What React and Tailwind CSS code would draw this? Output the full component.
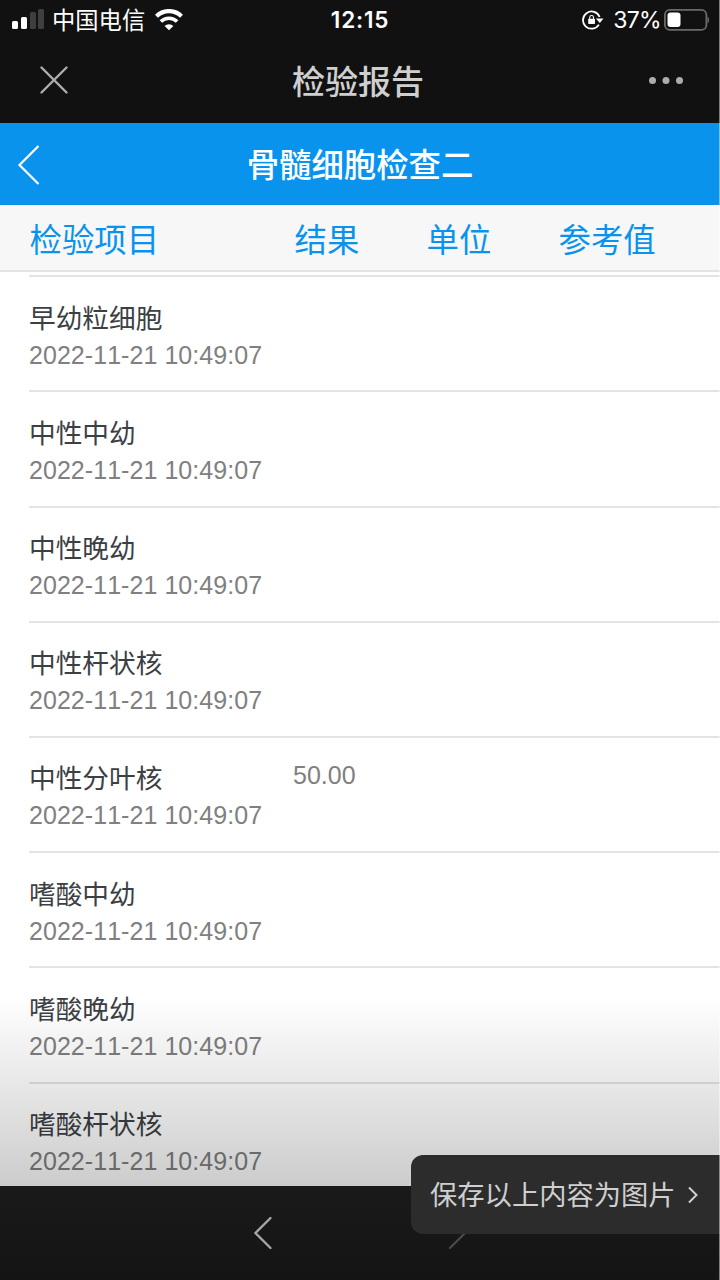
import React from 'react';

const columns = [
  { label: '检验项目', width: 'w-[265px]' },
  { label: '结果', width: 'w-[132px]' },
  { label: '单位', width: 'w-[132px]' },
  { label: '参考值', width: 'flex-1' },
];

const items = [
  { name: '早幼粒细胞', time: '2022-11-21 10:49:07', result: '' },
  { name: '中性中幼', time: '2022-11-21 10:49:07', result: '' },
  { name: '中性晚幼', time: '2022-11-21 10:49:07', result: '' },
  { name: '中性杆状核', time: '2022-11-21 10:49:07', result: '' },
  { name: '中性分叶核', time: '2022-11-21 10:49:07', result: '50.00' },
  { name: '嗜酸中幼', time: '2022-11-21 10:49:07', result: '' },
  { name: '嗜酸晚幼', time: '2022-11-21 10:49:07', result: '' },
  { name: '嗜酸杆状核', time: '2022-11-21 10:49:07', result: '' },
];

const StatusBar = () => (
  <div className="grid h-10 grid-cols-3 items-center text-white">
    <div className="flex items-center pl-3">
      <svg width="32" height="22" viewBox="0 0 32 22">
        <rect x="0" y="12" width="6" height="8" rx="1.5" fill="#fff" />
        <rect x="9" y="8" width="6" height="12" rx="1.5" fill="#fff" />
        <rect x="18" y="3" width="6" height="17" rx="1.5" fill="#3f3f3f" />
        <rect x="26" y="0" width="6" height="20" rx="1.5" fill="#3f3f3f" />
      </svg>
      <span className="ml-2 text-[23.3px] leading-[38px] pb-[2px]">中国电信</span>
      <svg className="ml-[10px]" width="28" height="22" viewBox="0 0 28 22">
        <path d="M1.5 7.2a17.8 17.8 0 0 1 25 0" fill="none" stroke="#fff" strokeWidth="4.2" />
        <path d="M5.9 12.6a11.4 11.4 0 0 1 16.2 0" fill="none" stroke="#fff" strokeWidth="3.6" />
        <path d="M9.6 17a6.4 6.4 0 0 1 8.8 0L14 21.2z" fill="#fff" />
      </svg>
    </div>
    <div className="text-center font-['Inter','Liberation_Sans',sans-serif] text-[22.5px] font-semibold leading-10 tracking-[0.8px]">
      12:15
    </div>
    <div className="flex items-center justify-end pr-[11px]">
      <svg width="22" height="20" viewBox="0 0 22 20">
        <path d="M16.9 14.6A8.6 8.6 0 1 1 17.6 7" fill="none" stroke="#fff" strokeWidth="1.8" />
        <path d="M13.9 8.6h7.6L17.8 13z" fill="#fff" />
        <rect x="6.2" y="8.8" width="6.8" height="5.2" rx="0.8" fill="#fff" />
        <path d="M7.7 9.2V7.4a1.9 1.9 0 0 1 3.8 0v1.8" fill="none" stroke="#fff" strokeWidth="1.1" />
      </svg>
      <span className="ml-[9px] font-['Inter','Liberation_Sans',sans-serif] text-[23px] leading-10 tracking-[-0.7px]">37%</span>
      <svg className="ml-[3px]" width="45" height="22" viewBox="0 0 45 22">
        <rect x="0.9" y="0.9" width="41.5" height="20" rx="5" fill="none" stroke="#6a6a6a" strokeWidth="1.8" />
        <rect x="3.5" y="3.5" width="13" height="14.5" rx="3" fill="#fff" />
        <path d="M43.5 7.5c2 1 2 6 0 7z" fill="#6a6a6a" />
      </svg>
    </div>
  </div>
);

const TitleBar = () => (
  <div className="flex h-[83px] items-center justify-between pb-[3px] pl-10 pr-[36px]">
    <svg width="28" height="28" viewBox="0 0 28 28" className="text-[#adadad]">
      <path d="M1.5 1.5l25 25M26.5 1.5l-25 25" stroke="currentColor" strokeWidth="2.4" strokeLinecap="round" />
    </svg>
    <h1 className="text-[33px] font-medium leading-none text-[#cfcfcf]">检验报告</h1>
    <svg width="36" height="8" viewBox="0 0 36 8" fill="#adadad">
      <circle cx="4.5" cy="4.4" r="3.5" />
      <circle cx="18" cy="4.4" r="3.5" />
      <circle cx="31.5" cy="4.4" r="3.5" />
    </svg>
  </div>
);

const ReportItem = ({ item }) => (
  <li className="ml-[29px] flex h-[115.2px] shrink-0 border-t-2 border-[#e4e4e4] pt-[19.4px]">
    <div className="w-[264px]">
      <p className="text-[26.7px] leading-10 text-[#3c3f44]">{item.name}</p>
      <p className="whitespace-nowrap font-['Liberation_Sans',sans-serif] text-[25px] leading-9 tracking-[0.05px] text-[#808080] [font-kerning:none]">{item.time}</p>
    </div>
    <span className="font-['Liberation_Sans',sans-serif] text-[25px] leading-9 text-[#808080]">{item.result}</span>
  </li>
);

const App = () => {
  return (
    <div className="relative flex h-[1280px] w-[720px] flex-col overflow-hidden bg-[#111111] font-['Noto_Sans_CJK_SC',sans-serif]">
      <StatusBar />
      <TitleBar />

      <header className="grid h-[82px] shrink-0 grid-cols-[80px_1fr_80px] items-center bg-[#0a93ed] text-white">
        <svg className="ml-[17px] mt-[2px]" width="24" height="42" viewBox="0 0 24 42">
          <path d="M21.5 2L2.5 21l19 19" fill="none" stroke="#fff" strokeWidth="2.2" />
        </svg>
        <h2 className="pb-[2px] text-center text-[32.4px] font-medium leading-none">骨髓细胞检查二</h2>
      </header>

      <div className="flex h-[67px] shrink-0 items-center border-b-2 border-[#e4e4e4] bg-[#f7f7f7] pl-[29.5px] pt-[2px] text-[32.4px] text-[#0a93ed]">
        {columns.map((col) => (
          <span key={col.label} className={col.width}>{col.label}</span>
        ))}
      </div>

      {/* List of results, shaded towards the bottom */}
      <main className="relative h-[914px] shrink-0 overflow-hidden bg-white">
        <ul className="flex flex-col pt-[3.2px]">
          {items.map((item) => (
            <ReportItem key={item.name} item={item} />
          ))}
        </ul>
        <div className="absolute inset-x-0 bottom-0 h-[190px] bg-linear-to-b from-black/0 to-black/20"></div>
      </main>

      <footer className="flex flex-1 items-center bg-linear-to-b from-[#1a1a1a] to-[#141414] pl-[253px]">
        <svg width="20" height="34" viewBox="0 0 20 34">
          <path d="M17.5 2L2.5 17l15 15" fill="none" stroke="#a6a6a6" strokeWidth="2.3" strokeLinecap="round" />
        </svg>
        <svg className="ml-[175px]" width="20" height="34" viewBox="0 0 20 34">
          <path d="M2 2l15 15L2 32" fill="none" stroke="#4a4a4a" strokeWidth="2.3" strokeLinecap="round" />
        </svg>
      </footer>

      <button className="absolute bottom-[46px] right-0 flex h-[79px] w-[309px] items-center rounded-l-[12px] bg-[#2c2c2c] pb-[2px] pl-[19px] text-[27.3px] text-[#cfcfcf]">
        保存以上内容为图片
        <svg className="ml-[11px] mt-[2px]" width="12" height="18" viewBox="0 0 12 18">
          <path d="M2 1.5L9.5 9 2 16.5" fill="none" stroke="#cfcfcf" strokeWidth="2" />
        </svg>
      </button>

      <div className="absolute inset-y-0 right-0 w-px bg-white/45"></div>
    </div>
  );
};

export default App;
